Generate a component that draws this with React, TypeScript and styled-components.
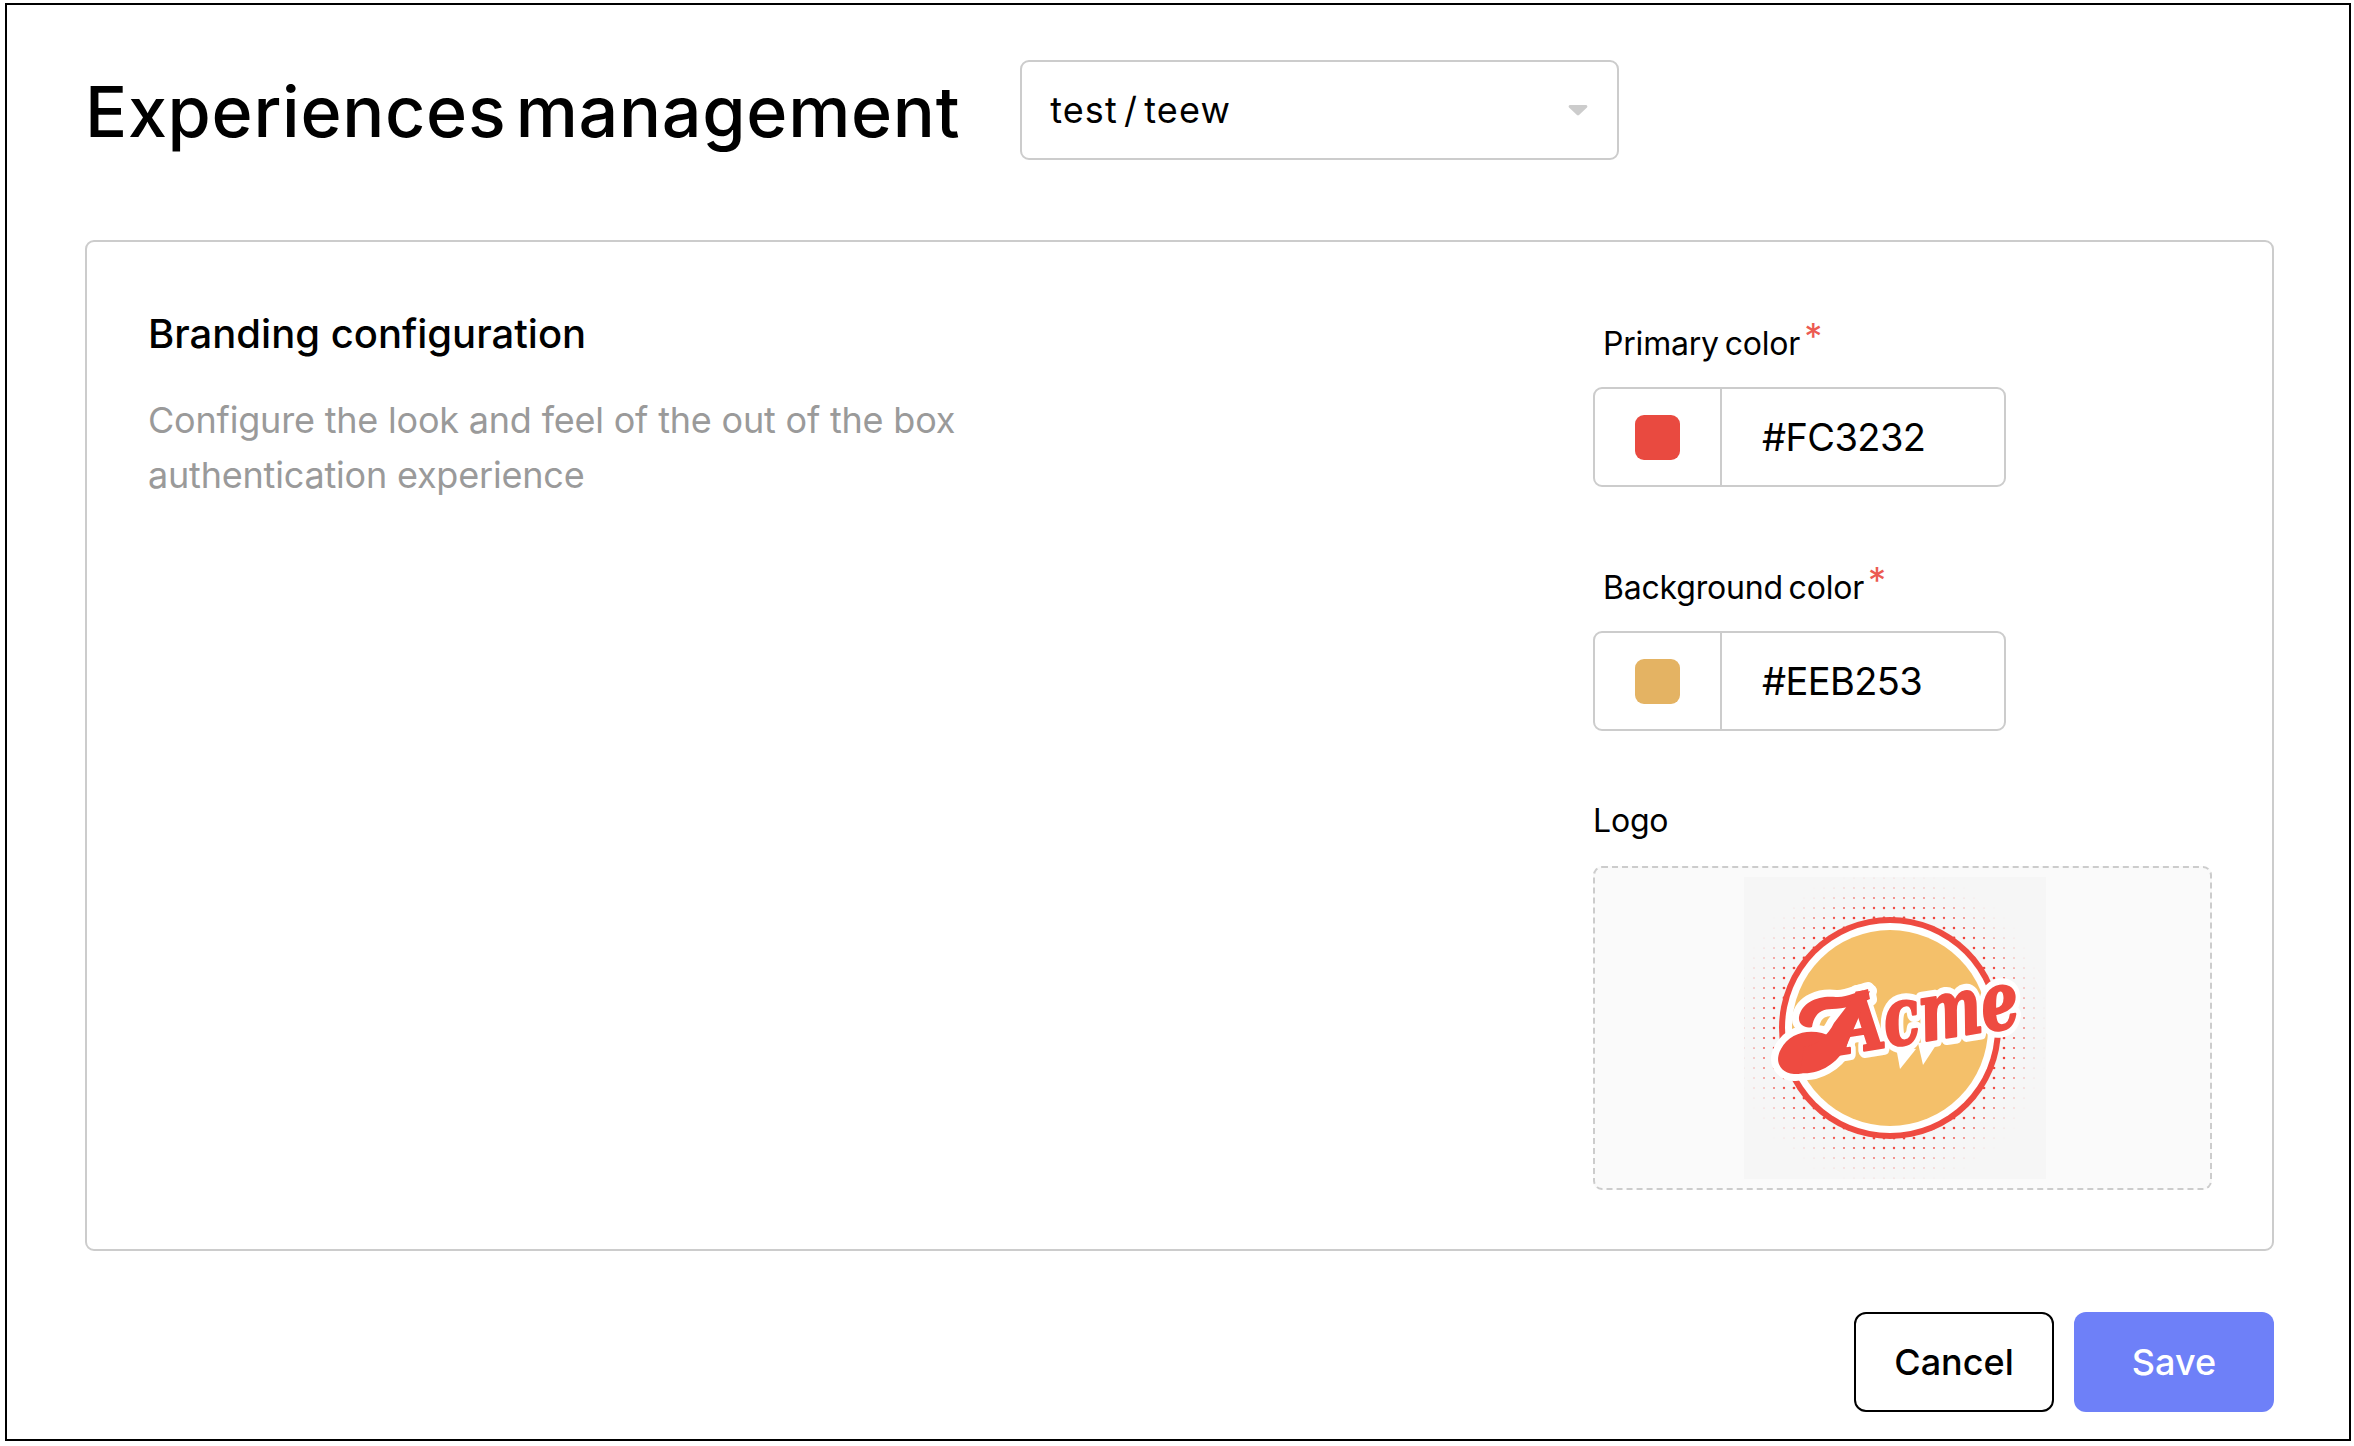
import styled, { createGlobalStyle } from "styled-components";

const GlobalStyle = createGlobalStyle`
  html, body {
    margin: 0;
    padding: 0;
    background: #fff;
    font-family: "Inter", "Liberation Sans", sans-serif;
    color: #000;
  }
  * { box-sizing: border-box; }
`;

const Frame = styled.div`
  margin: 3px 3px 5px 5px;
  height: 1438px;
  border: 2px solid #000;
  padding: 55px 75px 0 78px;
  display: flex;
  flex-direction: column;
`;

const Header = styled.header`
  display: flex;
  align-items: center;
  gap: 60px;
  height: 100px;
  margin-bottom: 80px;
`;

const Title = styled.h1`
  margin: 3px 0 0;
  font-size: 70px;
  font-weight: 500;
  letter-spacing: 0.7px;
  word-spacing: -10px;
  white-space: nowrap;
`;

const Select = styled.div`
  width: 599px;
  height: 100px;
  border: 2px solid #ccc;
  border-radius: 9px;
  padding: 0 29px 0 28px;
  display: flex;
  align-items: center;
  justify-content: space-between;
  font-size: 36px;
  letter-spacing: 1.1px;
  word-spacing: -5px;
`;

const Card = styled.section`
  height: 1011px;
  border: 2px solid #ccc;
  border-radius: 9px;
  padding: 83px 60px 0 61px;
  display: flex;
  justify-content: space-between;
`;

const Intro = styled.div`
  width: 830px;
`;

const CardTitle = styled.h2`
  margin: -19px 0 0;
  font-size: 40px;
  line-height: 56px;
  font-weight: 500;
  letter-spacing: 0;
`;

const Description = styled.p`
  margin: 31px 0 0;
  font-size: 36px;
  line-height: 55px;
  color: #9a9a9a;
  letter-spacing: -0.2px;
`;

const Fields = styled.div`
  width: 619px;
  display: flex;
  flex-direction: column;
`;

const Label = styled.label<{ $indent?: boolean }>`
  display: block;
  height: 40px;
  line-height: 40px;
  font-size: 32px;
  letter-spacing: -0.2px;
  word-spacing: -3px;
  margin: -3px 0 25px ${(p) => (p.$indent ? "10px" : "0")};
`;

const Required = styled.span`
  color: #ec5b52;
  font-size: 36px;
  margin-left: 4px;
  position: relative;
  top: -6px;
`;

const ColorField = styled.div<{ $gap: number }>`
  width: 413px;
  height: 100px;
  border: 2px solid #ccc;
  border-radius: 9px;
  display: flex;
  margin-bottom: ${(p) => p.$gap}px;
`;

const SwatchCell = styled.div`
  width: 127px;
  border-right: 2px solid #ccc;
  display: flex;
  align-items: center;
  justify-content: center;
`;

const Swatch = styled.div<{ $color: string }>`
  width: 45px;
  height: 45px;
  border-radius: 9px;
  background: ${(p) => p.$color};
`;

const ColorValue = styled.div`
  display: flex;
  align-items: center;
  padding-left: 40px;
  font-size: 38px;
  letter-spacing: -0.6px;
`;

const LogoBox = styled.div`
  height: 324px;
  border: 2px dashed #ccc;
  border-radius: 9px;
  background: #fafafa;
  display: flex;
  align-items: center;
  justify-content: center;
  padding-right: 16px;
`;

const Actions = styled.footer`
  display: flex;
  justify-content: flex-end;
  gap: 20px;
  margin-top: 61px;
`;

const Button = styled.button<{ $primary?: boolean }>`
  width: 200px;
  height: 100px;
  border-radius: 12px;
  border: ${(p) => (p.$primary ? "none" : "2px solid #000")};
  background: ${(p) => (p.$primary ? "#6e80f8" : "#fff")};
  color: ${(p) => (p.$primary ? "#fff" : "#000")};
  font-family: inherit;
  font-size: 36px;
  font-weight: 500;
`;

// halftone dots behind the badge, bigger close to the ring and fading out
const dots: { x: number; y: number; r: number; o: number }[] = [];
for (let col = -16; col <= 16; col++) {
  for (let row = -16; row <= 16; row++) {
    const x = 150 + col * 10;
    const y = 151 + row * 10;
    const d = Math.hypot(x - 146, y - 151);
    if (d < 105 || d > 160) continue;
    const t = (160 - d) / 55;
    dots.push({ x, y, r: 0.4 + t * 1.1, o: Math.min(1, 0.08 + t * 1.2) });
  }
}

const blob = "M37 172 C46 154 70 150 88 160 C84 184 66 198 50 197 C36 196 30 184 37 172 Z";
const flag =
  "M55 140 C58 124 76 118 92 120 C102 121 114 114 124 112 L126 122 C112 128 100 132 88 132 C76 132 70 138 68 150 C62 152 54 148 55 140 Z";
const stem = "M110 120 L126 114 L102 170 C92 188 74 198 56 196 L60 170 C74 168 84 158 90 146 Z";
const wordmark = "translate(98 177) rotate(-9) scale(0.74 1)";

function AcmeLogo() {
  return (
    <svg width="302" height="302" viewBox="0 0 302 302">
      <rect width="302" height="302" fill="#f6f6f6" />
      {dots.map((d) => (
        <circle key={`${d.x}-${d.y}`} cx={d.x} cy={d.y} r={d.r} fill="#f0413a" opacity={d.o} />
      ))}
      <circle cx="146" cy="151" r="111" fill="#ee4b41" />
      <circle cx="146" cy="151" r="105" fill="#fff" />
      <circle cx="146" cy="151" r="98" fill="#f4c06a" />
      <polygon points="152,170 156,192 172,172" fill="#fff" />
      <polygon points="174,166 179,188 196,162" fill="#fff" />
      <g fill="#fff" stroke="#fff" strokeWidth="14" strokeLinejoin="round">
        <path d={blob} />
        <path d={flag} />
        <path d={stem} />
      </g>
      <text
        transform={wordmark}
        fontFamily="DejaVu Serif, serif"
        fontWeight="700"
        fontStyle="italic"
        fontSize="80"
        stroke="#fff"
        strokeWidth="15"
        strokeLinejoin="round"
        fill="#ee4b41"
      >
        Acme
      </text>
      <text
        transform={wordmark}
        fontFamily="DejaVu Serif, serif"
        fontWeight="700"
        fontStyle="italic"
        fontSize="80"
        stroke="#ee4b41"
        strokeWidth="2.5"
        strokeLinejoin="round"
        fill="#ee4b41"
      >
        Acme
      </text>
      <g fill="#ee4b41">
        <path d={blob} />
        <path d={flag} />
        <path d={stem} />
      </g>
    </svg>
  );
}

export default function App() {
  return (
    <>
      <GlobalStyle />
      <Frame>
        <Header>
          <Title>Experiences management</Title>
          <Select>
            <span>test / teew</span>
            <svg width="20" height="12" viewBox="0 0 20 12">
              <path d="M2 1h16a1.5 1.5 0 0 1 1 2.5l-8 7.5a1.5 1.5 0 0 1-2 0L1 3.5A1.5 1.5 0 0 1 2 1z" fill="#ccc" />
            </svg>
          </Select>
        </Header>
        <Card>
          <Intro>
            <CardTitle>Branding configuration</CardTitle>
            <Description>
              Configure the look and feel of the out of the box authentication experience
            </Description>
          </Intro>
          <Fields>
            <Label $indent>
              Primary color<Required>*</Required>
            </Label>
            <ColorField $gap={82}>
              <SwatchCell>
                <Swatch $color="#e94a40" />
              </SwatchCell>
              <ColorValue>#FC3232</ColorValue>
            </ColorField>
            <Label $indent>
              Background color<Required>*</Required>
            </Label>
            <ColorField $gap={73}>
              <SwatchCell>
                <Swatch $color="#e4b363" />
              </SwatchCell>
              <ColorValue>#EEB253</ColorValue>
            </ColorField>
            <Label>Logo</Label>
            <LogoBox>
              <AcmeLogo />
            </LogoBox>
          </Fields>
        </Card>
        <Actions>
          <Button>Cancel</Button>
          <Button $primary>Save</Button>
        </Actions>
      </Frame>
    </>
  );
}
